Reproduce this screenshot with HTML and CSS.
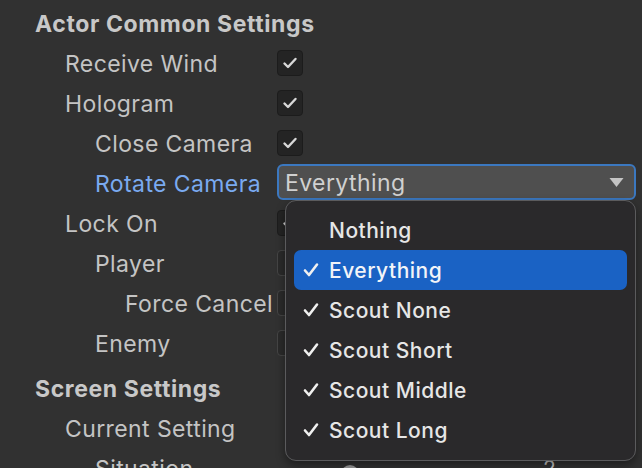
FILE: index.html
```html
<!DOCTYPE html>
<html>
<head>
<meta charset="utf-8">
<link rel="stylesheet" href="styles.css">
</head>
<body>
<div class="inspector">
  <div class="row header"><span class="label l0">Actor Common Settings</span></div>
  <div class="row"><span class="label l1">Receive Wind</span><span class="cb on"><svg viewBox="0 0 26 26"><path d="M7.5 13.5 L11 17 L18.5 9" /></svg></span></div>
  <div class="row"><span class="label l1">Hologram</span><span class="cb on"><svg viewBox="0 0 26 26"><path d="M7.5 13.5 L11 17 L18.5 9" /></svg></span></div>
  <div class="row"><span class="label l2">Close Camera</span><span class="cb on"><svg viewBox="0 0 26 26"><path d="M7.5 13.5 L11 17 L18.5 9" /></svg></span></div>
  <div class="row"><span class="label l2 focus">Rotate Camera</span>
    <div class="dropdown">
      <span class="dd-text">Everything</span>
      <svg class="arrow" viewBox="0 0 14 9"><path d="M0 0 H14 L7 9 Z"/></svg>
      <div class="menu">
        <div class="item"><span class="tick"></span>Nothing</div>
        <div class="item sel"><span class="tick"><svg viewBox="0 0 16 16"><path d="M2 8.5 L6 13 L14 2.5"/></svg></span>Everything</div>
        <div class="item"><span class="tick"><svg viewBox="0 0 16 16"><path d="M2 8.5 L6 13 L14 2.5"/></svg></span>Scout None</div>
        <div class="item"><span class="tick"><svg viewBox="0 0 16 16"><path d="M2 8.5 L6 13 L14 2.5"/></svg></span>Scout Short</div>
        <div class="item"><span class="tick"><svg viewBox="0 0 16 16"><path d="M2 8.5 L6 13 L14 2.5"/></svg></span>Scout Middle</div>
        <div class="item"><span class="tick"><svg viewBox="0 0 16 16"><path d="M2 8.5 L6 13 L14 2.5"/></svg></span>Scout Long</div>
      </div>
    </div>
  </div>
  <div class="row"><span class="label l1">Lock On</span><span class="cb on"><svg viewBox="0 0 26 26"><path d="M7.5 13.5 L11 17 L18.5 9" /></svg></span></div>
  <div class="row"><span class="label l2">Player</span><span class="cb off"></span></div>
  <div class="row"><span class="label l3">Force Cancel</span><span class="cb off"></span></div>
  <div class="row"><span class="label l2">Enemy</span><span class="cb off"></span></div>
  <div class="row header section"><span class="label l0">Screen Settings</span></div>
  <div class="row"><span class="label l1">Current Setting</span></div>
  <div class="row"><span class="label l2">Situation</span>
    <div class="slider"><div class="track"></div><div class="thumb"></div></div>
    <span class="num">2</span>
  </div>
</div>
</body>
</html>
```
FILE: styles.css
```css
html, body {
  margin: 0;
  padding: 0;
  background: #313131;
  overflow: hidden;
}
body {
  width: 642px;
  height: 468px;
  font-family: Inter, "Noto Sans", sans-serif;
  color: #c4c4c4;
}
.inspector {
  padding-top: 3px;
  display: flex;
  flex-direction: column;
}
.row {
  height: 40px;
  display: flex;
  align-items: center;
  position: relative;
}
.label {
  width: 277px;
  box-sizing: border-box;
  font-size: 23px;
  letter-spacing: 0.4px;
  white-space: nowrap;
  flex: none;
  padding-top: 1px;
}
.header .label {
  font-weight: 700;
  color: #c8c8c8;
  letter-spacing: 0.6px;
}
.section { margin-top: 5px; }
.l0 { padding-left: 35px; }
.l1 { padding-left: 65px; }
.l2 { padding-left: 95px; }
.l3 { padding-left: 125px; }
.focus { color: #7aaaf0; }
.cb {
  width: 26px;
  height: 26px;
  box-sizing: border-box;
  border-radius: 4px;
  display: block;
}
.cb.on {
  background: #242424;
  border: 1px solid #1c1c1c;
}
.cb.off {
  background: #2a2a2a;
  border: 1px solid #454545;
}
.cb svg {
  width: 26px;
  height: 26px;
  margin: -1px;
  display: block;
}
.cb path {
  fill: none;
  stroke: #d8d8d8;
  stroke-width: 2.4;
  stroke-linecap: round;
  stroke-linejoin: round;
}
.dropdown {
  position: relative;
  width: 359px;
  height: 36px;
  box-sizing: border-box;
  border: 2px solid #3b78c0;
  border-radius: 6px;
  background: #4f4f4f;
  display: flex;
  align-items: center;
  padding-left: 6px;
  margin-top: -2px;
}
.dd-text {
  font-size: 23px;
  letter-spacing: 0.4px;
  color: #d0d0d0;
  flex: 1;
  padding-top: 1px;
}
.arrow {
  width: 15px;
  height: 9px;
  margin-right: 10px;
  fill: #c4c4c4;
}
.menu {
  position: absolute;
  left: 6px;
  top: 34px;
  width: 351px;
  height: 261px;
  box-sizing: border-box;
  background: #2a292b;
  border: 1px solid #5b5b5d;
  border-radius: 11px;
  box-shadow: 0 4px 10px rgba(0,0,0,0.4);
  padding: 9px 8px 0 8px;
  display: flex;
  flex-direction: column;
  z-index: 5;
}
.item {
  height: 40px;
  display: flex;
  align-items: center;
  border-radius: 7px;
  font-size: 21px;
  font-weight: 500;
  letter-spacing: 0.5px;
  color: #e6e6e6;
  padding-left: 9px;
}
.item.sel {
  background: #1a62c4;
  color: #f2f4f8;
}
.tick {
  width: 26px;
  flex: none;
  display: flex;
  align-items: center;
}
.tick svg {
  width: 16px;
  height: 16px;
}
.tick path {
  fill: none;
  stroke: #f0f0f0;
  stroke-width: 2.6;
  stroke-linecap: round;
  stroke-linejoin: round;
}
.slider {
  position: relative;
  width: 248px;
  height: 26px;
  margin-top: 4px;
}
.track {
  position: absolute;
  left: 0;
  right: 0;
  top: 14px;
  height: 4px;
  background: #5e5e5e;
  border-radius: 2px;
}
.thumb {
  position: absolute;
  left: 64px;
  top: 8px;
  width: 18px;
  height: 18px;
  border-radius: 50%;
  background: #999;
}
.num {
  margin-left: 18px;
  font-size: 21px;
  color: #c4c4c4;
}
```
